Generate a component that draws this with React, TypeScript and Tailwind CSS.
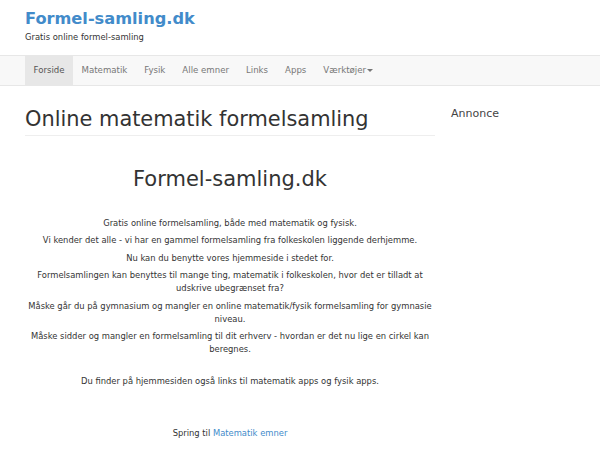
import React from "react";

const font = { fontFamily: '"DejaVu Sans", Verdana, sans-serif' };

export default function App() {
  const nav = ["Matematik", "Fysik", "Alle emner", "Links", "Apps"];
  return (
    <div className="w-[600px] h-[450px] overflow-hidden bg-white text-[#333]" style={font}>
      <div className="px-[25px] pt-[8px] h-[55px]">
        <div className="text-[16.2px] leading-[22px] font-bold text-[#428bca]">Formel-samling.dk</div>
        <div className="text-[8.4px] leading-[12px] mt-[1px] text-[#333]">Gratis online formel-samling</div>
      </div>
      <div className="h-[31px] bg-[#f8f8f8] border-y border-[#e7e7e7] flex px-[25px] text-[8.6px] text-[#777]">
        <div className="px-[8.5px] bg-[#e7e7e7] text-[#555] flex items-center">Forside</div>
        {nav.map((n) => (
          <div key={n} className="px-[8.5px] flex items-center">{n}</div>
        ))}
        <div className="px-[8.5px] flex items-center">
          Værktøjer
          <span className="ml-[1px] inline-block w-0 h-0 border-l-[3px] border-r-[3px] border-t-[3px] border-l-transparent border-r-transparent border-t-[#777]"></span>
        </div>
      </div>
      <div className="flex px-[25px] pt-[19px]">
        <div className="w-[410px]">
          <h1 className="text-[20.9px] leading-[28px] pb-[2px] border-b border-[#eee]">Online matematik formelsamling</h1>
          <div className="text-center text-[8.4px] leading-[13px]">
            <h2 className="text-[21px] leading-[28px] mt-[29px] mb-[24px]">Formel-samling.dk</h2>
            <p className="mb-[4.4px]">Gratis online formelsamling, både med matematik og fysisk.</p>
            <p className="mb-[4.4px]">Vi kender det alle - vi har en gammel formelsamling fra folkeskolen liggende derhjemme.</p>
            <p className="mb-[4.4px]">Nu kan du benytte vores hjemmeside i stedet for.</p>
            <p className="mb-[4.4px]">Formelsamlingen kan benyttes til mange ting, matematik i folkeskolen, hvor det er tilladt at udskrive ubegrænset fra?</p>
            <p className="mb-[4.4px]">Måske går du på gymnasium og mangler en online matematik/fysik formelsamling for gymnasie niveau.</p>
            <p>Måske sidder og mangler en formelsamling til dit erhverv - hvordan er det nu lige en cirkel kan beregnes.</p>
            <p className="mt-[19px]">Du finder på hjemmesiden også links til matematik apps og fysik apps.</p>
            <p className="mt-[39px]">Spring til <span className="text-[#428bca]">Matematik emner</span></p>
          </div>
        </div>
        <div className="ml-[16px] pt-[2px] text-[11px] leading-[14px] text-[#444]">Annonce</div>
      </div>
    </div>
  );
}
